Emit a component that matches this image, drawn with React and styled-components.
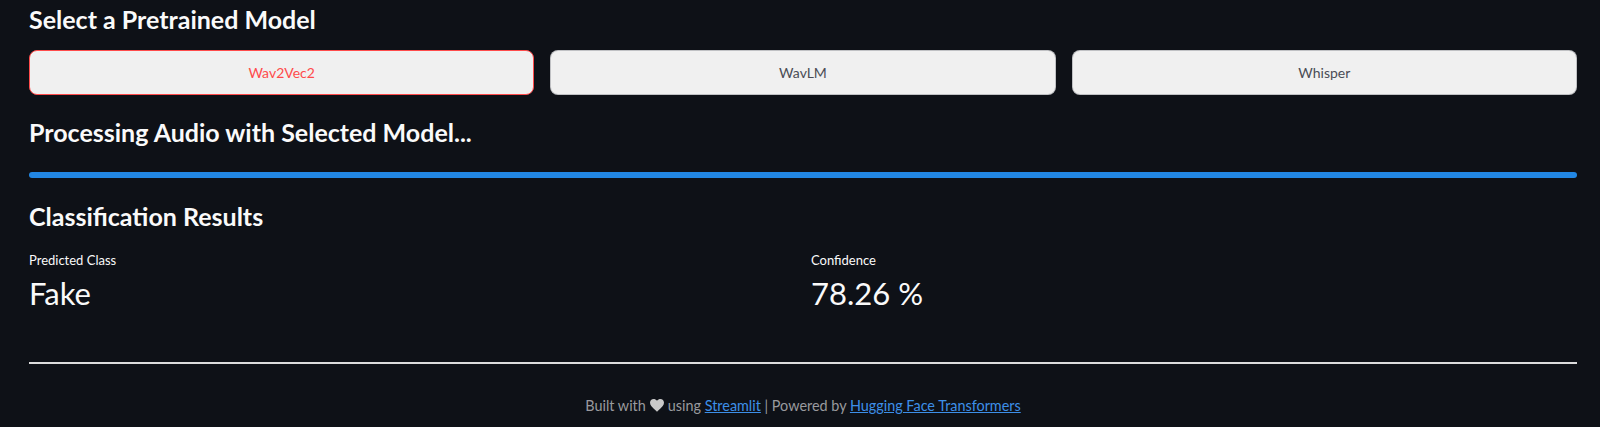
import React from 'react'
import styled, { createGlobalStyle } from 'styled-components'

const GlobalStyle = createGlobalStyle`
  html, body {
    margin: 0;
    padding: 0;
    background: #0e1117;
  }
  body {
    font-family: Lato, "Open Sans", sans-serif;
    color: #fafafa;
  }
`

const Page = styled.main`
  width: 1600px;
  height: 427px;
  box-sizing: border-box;
  padding: 4px 23px 0 29px;
  background: #0e1117;
  overflow: hidden;
`

const Heading = styled.h3`
  margin: ${(p) => p.$top || 0}px 0 0;
  font-size: 25px;
  line-height: 31px;
  font-weight: 700;
  color: #fafafa;
`

const ModelRow = styled.div`
  display: grid;
  grid-template-columns: repeat(3, 1fr);
  gap: 16px;
  margin-top: 15px;
`

const ModelButton = styled.button`
  height: 45px;
  border-radius: 8px;
  background: #f0f0f0;
  border: 1px solid ${(p) => (p.$active ? '#ff4b4b' : 'rgba(49, 51, 63, 0.25)')};
  color: ${(p) => (p.$active ? '#ff4b4b' : '#4a4c55')};
  font-family: Lato, sans-serif;
  font-size: 14px;
  cursor: pointer;
`

const Progress = styled.div`
  margin-top: 24px;
  height: 6px;
  border-radius: 3px;
  background: #2287e4;
`

const Metrics = styled.div`
  display: grid;
  grid-template-columns: 1fr 1fr;
  gap: 16px;
  margin-top: 20px;
`

const Metric = styled.div`
  display: flex;
  flex-direction: column;
`

const MetricLabel = styled.div`
  font-size: 13px;
  line-height: 16px;
  color: #fafafa;
`

const MetricValue = styled.div`
  margin-top: 7px;
  font-size: 31px;
  line-height: 36px;
  color: #fafafa;
`

const Rule = styled.hr`
  margin: 51px 0 0;
  border: none;
  border-top: 2px solid #dcdcdc;
`

const Footer = styled.footer`
  margin-top: 33px;
  text-align: center;
  font-size: 14.4px;
  line-height: 17px;
  color: #999a9e;

  a {
    color: #3d8fe8;
    text-decoration: underline;
  }
`

const Heart = () => (
  <svg width="14" height="13" viewBox="0 0 24 22" style={{ verticalAlign: '-1px', margin: '0 4px' }}>
    <path
      d="M12 21.5 L10.3 20 C4.2 14.5 0 10.7 0 6.2 C0 2.7 2.7 0 6.2 0 C8.3 0 10.5 1 12 2.7 C13.5 1 15.7 0 17.8 0 C21.3 0 24 2.7 24 6.2 C24 10.7 19.8 14.5 13.7 20 Z"
      fill="#c9c9c9"
    />
  </svg>
)

const models = ['Wav2Vec2', 'WavLM', 'Whisper']

export default function App() {
  return (
    <>
      <GlobalStyle />
      <Page>
        <Heading>Select a Pretrained Model</Heading>
        <ModelRow>
          {models.map((m, i) => (
            <ModelButton key={m} $active={i === 0}>
              {m}
            </ModelButton>
          ))}
        </ModelRow>
        <Heading $top={22}>Processing Audio with Selected Model...</Heading>
        <Progress />
        <Heading $top={23}>Classification Results</Heading>
        <Metrics>
          <Metric>
            <MetricLabel>Predicted Class</MetricLabel>
            <MetricValue>Fake</MetricValue>
          </Metric>
          <Metric>
            <MetricLabel>Confidence</MetricLabel>
            <MetricValue>78.26 %</MetricValue>
          </Metric>
        </Metrics>
        <Rule />
        <Footer>
          Built with<Heart />using <a href="#">Streamlit</a> | Powered by{' '}
          <a href="#">Hugging Face Transformers</a>
        </Footer>
      </Page>
    </>
  )
}
